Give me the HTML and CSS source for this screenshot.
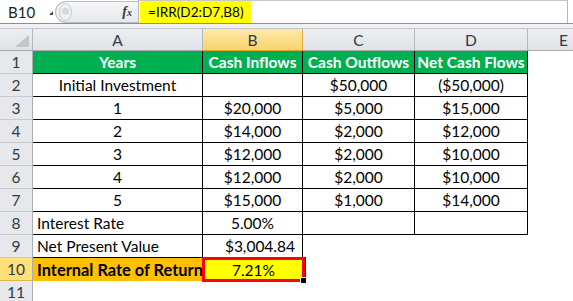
FILE: index.html
```html
<!DOCTYPE html>
<html>
<head>
<meta charset="utf-8">
<link rel="stylesheet" href="styles.css">
</head>
<body>
<div class="app">
  <div class="fbar">
    <div class="namebox"><span class="ref">B10</span><svg class="dd" width="4" height="4" viewBox="0 0 4 4"><path d="M4 0V4H0Z" fill="#444"/></svg></div>
    <div class="fxarea"><span class="knob"></span><span class="fx">f<span class="x">x</span></span></div>
    <div class="input"><span class="formula">=IRR(D2:D7,B8)</span></div>
  </div>
  <div class="band"></div>
  <div class="sheet">
    <div class="corner"><span class="tri"></span></div>
    <div class="ch">A</div>
    <div class="ch sel">B</div>
    <div class="ch">C</div>
    <div class="ch">D</div>
    <div class="ch last">E</div>

    <div class="rh">1</div>
    <div class="c g">Years</div>
    <div class="c g">Cash Inflows</div>
    <div class="c g">Cash Outflows</div>
    <div class="c g">Net Cash Flows</div>
    <div class="c"></div>

    <div class="rh">2</div>
    <div class="c b">Initial Investment</div>
    <div class="c b"></div>
    <div class="c b">$50,000</div>
    <div class="c b">($50,000)</div>
    <div class="c"></div>

    <div class="rh">3</div>
    <div class="c b">1</div>
    <div class="c b">$20,000</div>
    <div class="c b">$5,000</div>
    <div class="c b">$15,000</div>
    <div class="c"></div>

    <div class="rh">4</div>
    <div class="c b">2</div>
    <div class="c b">$14,000</div>
    <div class="c b">$2,000</div>
    <div class="c b">$12,000</div>
    <div class="c"></div>

    <div class="rh">5</div>
    <div class="c b">3</div>
    <div class="c b">$12,000</div>
    <div class="c b">$2,000</div>
    <div class="c b">$10,000</div>
    <div class="c"></div>

    <div class="rh">6</div>
    <div class="c b">4</div>
    <div class="c b">$12,000</div>
    <div class="c b">$2,000</div>
    <div class="c b">$10,000</div>
    <div class="c"></div>

    <div class="rh">7</div>
    <div class="c b">5</div>
    <div class="c b">$15,000</div>
    <div class="c b">$1,000</div>
    <div class="c b">$14,000</div>
    <div class="c"></div>

    <div class="rh">8</div>
    <div class="c b left">Interest Rate</div>
    <div class="c b">5.00%</div>
    <div class="c b"></div>
    <div class="c b"></div>
    <div class="c"></div>

    <div class="rh">9</div>
    <div class="c b left">Net Present Value</div>
    <div class="c b right">$3,004.84</div>
    <div class="c"></div>
    <div class="c"></div>
    <div class="c"></div>

    <div class="rh selrow">10</div>
    <div class="c o left">Internal Rate of Return</div>
    <div class="c active">7.21%<span class="handle"></span></div>
    <div class="c"></div>
    <div class="c"></div>
    <div class="c"></div>

    <div class="rh">11</div>
    <div class="c"></div>
    <div class="c"></div>
    <div class="c"></div>
    <div class="c"></div>
    <div class="c"></div>
  </div>
</div>
</body>
</html>
```

FILE: styles.css
```css
html, body {
  margin: 0;
  padding: 0;
  background: #fff;
}
body {
  width: 573px;
  height: 301px;
  overflow: hidden;
  font-family: Lato, "Liberation Sans", sans-serif;
  font-size: 15.5px;
  color: #000;
}
.app {
  display: flex;
  flex-direction: column;
}
.fbar {
  height: 23px;
  display: flex;
  border-bottom: 1px solid #8e8e8e;
  background: #fff;
}
.namebox {
  width: 55px;
  display: flex;
  align-items: center;
  padding-left: 8px;
  box-sizing: border-box;
  gap: 14px;
  color: #1e1e1e;
}
.ref {
  font-size: 15px;
}
.dd {
  margin-top: 3px;
}
.fxarea {
  width: 83px;
  display: flex;
  align-items: center;
  justify-content: space-between;
  box-sizing: border-box;
  background: linear-gradient(#f6f7f8, #e6e8eb);
  border: 1px solid #b7bcc3;
  border-right: none;
  border-radius: 11px 0 0 11px;
  margin-top: 1px;
  height: 22px;
  padding: 0 4px 0 3px;
}
.knob {
  width: 11px;
  height: 16px;
  border-radius: 50%;
  background: radial-gradient(circle at 50% 45%, #d4d6d9 0 3px, #eef0f2 4px);
  border: 1px solid #c9ccd0;
}
.fx {
  font-family: "Liberation Serif", serif;
  font-style: italic;
  font-weight: bold;
  font-size: 14px;
  color: #3a3a3a;
  margin-right: 2px;
}
.fx .x {
  font-size: 10px;
}
.input {
  flex: 1;
  border-left: 1px solid #b5b5b5;
  border-right: 1px solid #b5b5b5;
  border-top: 1px solid #c8c8c8;
  margin-right: 5px;
  display: flex;
}
.formula {
  background: #ffff00;
  padding: 0 7px 0 8px;
  margin-left: 1px;
  display: flex;
  align-items: center;
  font-size: 13.6px;
  color: #000;
}
.band {
  height: 4px;
  background: #eef0f3;
  border-bottom: 1px solid #c5c8cc;
}
.sheet {
  display: grid;
  grid-template-columns: 33px 170px 100px 112px 113px 1fr;
  grid-template-rows: 22px repeat(11, 23px);
}
.corner {
  background: linear-gradient(#eceef1, #dfe2e6);
  border-right: 1px solid #b5b8bd;
  border-bottom: 1px solid #a9acb1;
  position: relative;
}
.tri {
  position: absolute;
  right: 3px;
  bottom: 3px;
  width: 0;
  height: 0;
  border-left: 14px solid transparent;
  border-bottom: 12px solid #c2c5ca;
}
.ch {
  background: linear-gradient(#edeff2, #dfe2e6);
  border-right: 1px solid #b5b8bd;
  border-bottom: 1px solid #a9acb1;
  display: flex;
  align-items: center;
  justify-content: center;
  color: #2f3a45;
  font-size: 15.5px;
}
.ch.last {
  justify-content: flex-start;
  padding-left: 31px;
  border-right: none;
}
.ch.sel {
  background: linear-gradient(#fde9a9, #f9d46e);
  border-right-color: #e3ad39;
  border-bottom-color: #e0a42f;
}
.rh {
  background: #e6e8eb;
  border-right: 1px solid #a9acb1;
  border-bottom: 1px solid #c7cacf;
  display: flex;
  align-items: center;
  justify-content: center;
  color: #2f3a45;
  font-size: 15.5px;
}
.rh.selrow {
  background: #ffdf7a;
  border-bottom-color: #e6b54a;
}
.c {
  display: flex;
  align-items: center;
  justify-content: center;
  white-space: nowrap;
  min-width: 0;
}
.c.left {
  justify-content: flex-start;
  padding-left: 4px;
}
.c.right {
  justify-content: flex-end;
  padding-right: 7px;
}
.c.g {
  background: #00b050;
  color: #fff;
  font-weight: bold;
  border-right: 1px solid #000;
  border-bottom: 1px solid #000;
}
.c.b {
  border-right: 1px solid #000;
  border-bottom: 1px solid #000;
}
.c.o {
  background: #ffc000;
  font-weight: bold;
  font-size: 16.4px;
}
.c.active {
  background: #ffff00;
  border: 3px solid #ff0000;
  margin: -1px -2px -1px -1px;
  position: relative;
  box-shadow: 1px 0 0 #000;
}
.handle {
  position: absolute;
  right: -4px;
  bottom: -4px;
  width: 5px;
  height: 5px;
  background: #000;
  border: 1px solid #fff;
  border-right: none;
  border-bottom: none;
}
```
